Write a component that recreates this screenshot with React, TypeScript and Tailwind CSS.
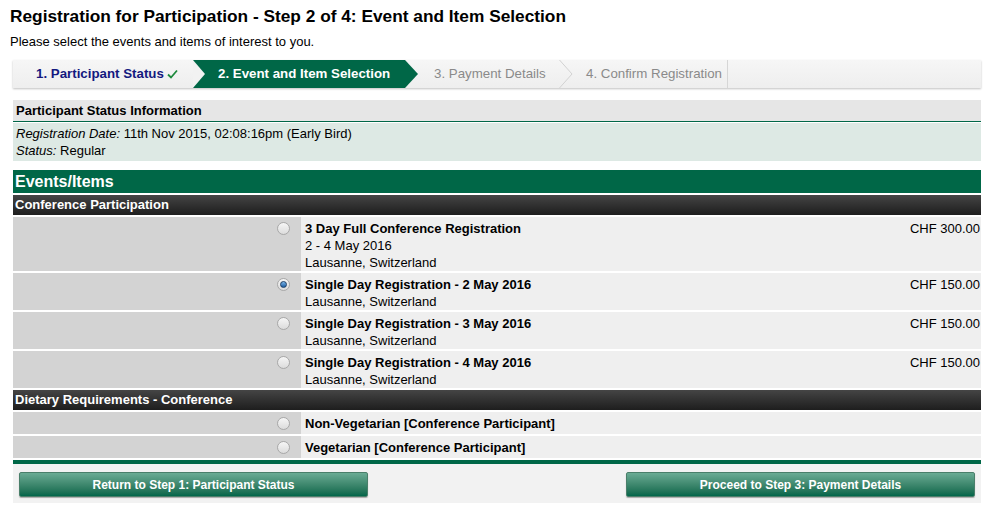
import React from 'react';

type Item = {
  id: string;
  title: string;
  lines: string[];
  price?: string;
  checked?: boolean;
};

const conference: Item[] = [
  {
    id: 'full',
    title: '3 Day Full Conference Registration',
    lines: ['2 - 4 May 2016', 'Lausanne, Switzerland'],
    price: 'CHF 300.00',
  },
  {
    id: 'd2',
    title: 'Single Day Registration - 2 May 2016',
    lines: ['Lausanne, Switzerland'],
    price: 'CHF 150.00',
    checked: true,
  },
  {
    id: 'd3',
    title: 'Single Day Registration - 3 May 2016',
    lines: ['Lausanne, Switzerland'],
    price: 'CHF 150.00',
  },
  {
    id: 'd4',
    title: 'Single Day Registration - 4 May 2016',
    lines: ['Lausanne, Switzerland'],
    price: 'CHF 150.00',
  },
];

const dietary: Item[] = [
  { id: 'nonveg', title: 'Non-Vegetarian [Conference Participant]', lines: [] },
  { id: 'veg', title: 'Vegetarian [Conference Participant]', lines: [] },
];

function Radio({ checked }: { checked?: boolean }) {
  return (
    <span className="flex h-[13px] w-[13px] items-center justify-center rounded-full border border-[#a8a8a8] bg-gradient-to-b from-[#f6f6f6] to-[#dcdcdc]">
      {checked && (
        <span className="h-[7px] w-[7px] rounded-full border border-[#1d3f66] bg-gradient-to-b from-[#7ab6ea] to-[#1c5ea3]" />
      )}
    </span>
  );
}

function ItemRow({ item }: { item: Item }) {
  return (
    <div className="flex min-h-[22px]">
      <div className="flex w-[288px] shrink-0 justify-end bg-[#d3d3d3] pr-[11px] pt-[5px]">
        <Radio checked={item.checked} />
      </div>
      <div className="flex flex-1 justify-between bg-[#efefef] pl-[4px] pt-[3px] leading-[17px]">
        <div>
          <div className="font-bold">{item.title}</div>
          {item.lines.map(line => (
            <div key={line}>{line}</div>
          ))}
        </div>
        {item.price && <div className="pr-[1px]">{item.price}</div>}
      </div>
    </div>
  );
}

function SectionHeader({ label }: { label: string }) {
  return (
    <div className="h-[20px] bg-gradient-to-b from-[#454545] to-[#1e1e1e] pl-[2px] font-bold leading-[20px] text-white">
      {label}
    </div>
  );
}

function Steps() {
  return (
    <div className="relative flex h-[28px] bg-gradient-to-b from-[#f6f6f6] to-[#eeeeee] text-[13.3px] leading-[28px] shadow-[0_1px_2px_rgba(0,0,0,0.25)]">
      <div className="relative w-[180px] pl-[23px] font-bold text-[#14197f]">
        <span className="inline-flex items-center gap-[3px]">
          1. Participant Status
          <svg width="11" height="10" viewBox="0 0 11 10">
            <path d="M1 5.5 L4 8.5 L10 1.5" fill="none" stroke="#1d8a3c" strokeWidth="1.8" />
          </svg>
        </span>
        <svg className="absolute -right-[12px] top-0 z-10" width="12" height="28" viewBox="0 0 12 28">
          <polygon points="0,0 12,14 0,28" fill="#f2f2f2" />
        </svg>
      </div>
      <div className="relative w-[212px] bg-[#006747] pl-[25px] font-bold text-white">
        2. Event and Item Selection
        <svg className="absolute -right-[13px] top-0 z-10" width="13" height="28" viewBox="0 0 13 28">
          <polygon points="0,0 13,14 0,28" fill="#006747" />
        </svg>
      </div>
      <div className="relative w-[155px] pl-[29px] text-[#8a8a8a]">
        3. Payment Details
        <svg className="absolute -right-[13px] top-0" width="14" height="28" viewBox="0 0 14 28">
          <polyline points="0.5,0 13,14 0.5,28" fill="none" stroke="#d2d2d2" strokeWidth="1" />
        </svg>
      </div>
      <div className="w-[168px] border-r border-[#d6d6d6] pl-[26px] text-[#8a8a8a]">
        4. Confirm Registration
      </div>
      <div className="flex-1" />
    </div>
  );
}

function GreenButton({ label }: { label: string }) {
  return (
    <button className="h-[25px] w-[349px] rounded-[2px] border border-[#4a7f6a] bg-gradient-to-b from-[#6aab94] to-[#00664a] text-[12px] font-bold text-white shadow-[0_1px_1px_rgba(0,0,0,0.3)]">
      {label}
    </button>
  );
}

export default function App() {
  return (
    <div className="min-h-[509px] bg-white px-[10px] font-['Liberation_Sans',Arial,sans-serif] text-[13px] text-black">
      <h1 className="pt-[6px] text-[17.3px] font-bold leading-[20px]">
        Registration for Participation - Step 2 of 4: Event and Item Selection
      </h1>
      <p className="mt-[8px] leading-[16px]">Please select the events and items of interest to you.</p>

      <div className="ml-[3px] w-[968px]">
        <div className="mt-[10px]">
          <Steps />
        </div>

        <div className="mt-[12px]">
          <div className="h-[22px] border-b border-[#006747] bg-[#e6e6e6] pl-[3px] font-bold leading-[21px]">
            Participant Status Information
          </div>
          <div className="mt-[1px] bg-[#dde9e4] py-[2px] pl-[3px] leading-[17px]">
            <div>
              <i>Registration Date:</i> 11th Nov 2015, 02:08:16pm (Early Bird)
            </div>
            <div>
              <i>Status:</i> Regular
            </div>
          </div>
        </div>

        <div className="mt-[9px]">
          <div className="h-[23px] bg-[#006747] pl-[2px] text-[16px] font-bold leading-[23px] text-white">
            Events/Items
          </div>
          <div className="mt-[2px] flex flex-col gap-[2px]">
            <SectionHeader label="Conference Participation" />
            {conference.map(item => (
              <ItemRow key={item.id} item={item} />
            ))}
            <SectionHeader label="Dietary Requirements - Conference" />
            {dietary.map(item => (
              <ItemRow key={item.id} item={item} />
            ))}
          </div>
          <div className="mt-[2px] h-[4px] bg-[#006747]" />
          <div className="flex justify-between bg-[#f2f2f2] px-[6px] pt-[8px] pb-[6px]">
            <GreenButton label="Return to Step 1: Participant Status" />
            <GreenButton label="Proceed to Step 3: Payment Details" />
          </div>
        </div>
      </div>
    </div>
  );
}
